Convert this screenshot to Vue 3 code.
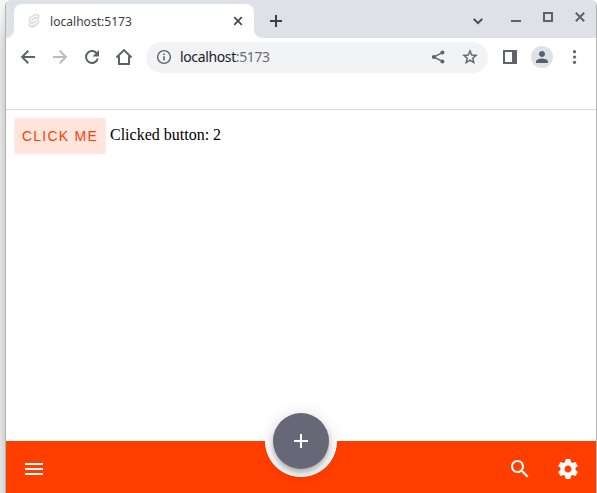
<script setup>
import { ref } from 'vue'

const count = ref(2)
</script>

<template>
  <div class="desktop">
    <div class="window">
      <header class="tabstrip">
        <div class="tab">
          <svg class="favicon" width="16" height="16" viewBox="0 0 16 16">
            <path class="badge" d="M6.200 2.400 9.100 1.100c2.400-1 4.700 1 4.400 3.200-.1.7-.4 1.300-.9 1.800 1.400 2.200.5 4.800-1.500 5.800l-3.400 2.300c-2.400 1.400-5.200-.2-5.200-2.800 0-.8.3-1.500.8-2.100C2.100 7 2.700 4.800 4.200 3.700Z" />
            <path class="letter" d="M11.600 4.600C11.500 3 9.900 2.500 8.800 3.200L5.400 5.300C3.800 6.400 4.900 8.500 6.600 7.900l2.200-1.200c1.800-.7 3.200 1.300 1.600 2.600L7 11.600c-1.400.8-3 0-2.900-1.500" />
          </svg>
          <span class="tab-title">localhost:5173</span>
          <svg class="tab-close" width="10" height="10" viewBox="0 0 10 10"><path d="m1.200 1.200 7.600 7.600m0-7.600L1.200 8.800" /></svg>
        </div>
        <svg class="new-tab" width="12" height="12" viewBox="0 0 12 12"><path d="M6 0v12M0 6h12" /></svg>
        <div class="controls">
          <svg class="chevron" width="12" height="12" viewBox="0 0 12 12"><path d="m1.700 3.900 4.300 4.200 4.300-4.200" /></svg>
          <svg class="minimize" width="10" height="10" viewBox="0 0 10 10"><path d="M0 9h10" /></svg>
          <svg class="maximize" width="10" height="10" viewBox="0 0 10 10"><path d="M1 1h8v8H1z" /></svg>
          <svg class="close" width="10" height="10" viewBox="0 0 10 10"><path d="m.8.8 8.400 8.400m0-8.400L.8 9.200" /></svg>
        </div>
      </header>

      <nav class="toolbar">
        <span class="cell"><svg width="16" height="16" viewBox="0 0 16 16"><path class="line" d="M15 8H2.400M8.300 1.800 2.100 8l6.200 6.200" /></svg></span>
        <span class="cell disabled"><svg width="16" height="16" viewBox="0 0 16 16"><path class="line" d="M1 8h12.600M7.700 1.800 13.900 8l-6.200 6.200" /></svg></span>
        <span class="cell"><svg width="16" height="16" viewBox="0 0 16 16"><path class="line" d="M13.200 4.900A6 6 0 1 0 13.800 9.500" /><path d="M15 1v6.500H8.500z" /></svg></span>
        <span class="cell"><svg width="18" height="18" viewBox="0 0 18 18"><path class="line" d="M1.500 9.500 9 2.100l7.500 7.400M4 8.200v7.800h10V8.200" /></svg></span>
        <div class="address">
          <span class="cell info"><svg width="16" height="16" viewBox="0 0 16 16"><circle class="thin" cx="8" cy="8" r="6.400" /><path d="M7.200 7.300h1.600v4H7.200zM7.200 4.500h1.600v1.600H7.200z" /></svg></span>
          <span class="url">localhost<span class="port">:5173</span></span>
          <span class="cell share"><svg width="16" height="16" viewBox="0 0 16 16"><path class="thin" d="m12.400 3.700-8.800 4.300 8.800 4.300" /><circle cx="12.400" cy="3.500" r="2" /><circle cx="3.800" cy="8" r="2" /><circle cx="12.400" cy="12.500" r="2" /></svg></span>
          <span class="cell"><svg class="star" width="18" height="18" viewBox="0 0 24 24"><path d="m22 9.240-7.190-.62L12 2 9.190 8.630 2 9.240l5.460 4.730L5.820 21 12 17.270 18.180 21l-1.630-7.030L22 9.240zM12 15.400l-3.760 2.270 1-4.280-3.320-2.880 4.380-.38L12 6.100l1.710 4.040 4.380.38-3.320 2.880 1 4.280L12 15.400z" /></svg></span>
        </div>
        <span class="cell"><svg width="14" height="14" viewBox="0 0 14 14"><path fill-rule="evenodd" d="M0 0h14v14H0zM2 2v10h7V2z" /></svg></span>
        <span class="cell"><span class="avatar"><svg width="18" height="18" viewBox="0 0 24 24"><path d="M12 12c2.210 0 4-1.790 4-4s-1.790-4-4-4-4 1.790-4 4 1.790 4 4 4zm0 2c-2.670 0-8 1.340-8 4v2h16v-2c0-2.660-5.330-4-8-4z" /></svg></span></span>
        <span class="cell"><svg width="5" height="14" viewBox="0 0 5 14"><circle cx="2.500" cy="1.700" r="1.600" /><circle cx="2.500" cy="7" r="1.600" /><circle cx="2.500" cy="12.300" r="1.600" /></svg></span>
      </nav>

      <div class="bookmarks"></div>

      <main class="page">
        <button class="action" @click="count++">CLICK ME</button>
        <span class="status">Clicked button: {{ count }}</span>
      </main>

      <footer class="appbar">
        <svg width="24" height="24" viewBox="0 0 24 24"><path d="M3 18h18v-2H3v2zm0-5h18v-2H3v2zm0-7v2h18V6H3z" /></svg>
        <div class="notch">
          <button class="fab"><svg width="24" height="24" viewBox="0 0 24 24"><path d="M19 13h-6v6h-2v-6H5v-2h6V5h2v6h6v2z" /></svg></button>
        </div>
        <div class="appbar-actions">
          <svg width="24" height="24" viewBox="0 0 24 24"><path d="M15.500 14h-.79l-.28-.27C15.410 12.590 16 11.110 16 9.500 16 5.910 13.090 3 9.500 3S3 5.910 3 9.500 5.910 16 9.500 16c1.610 0 3.090-.59 4.230-1.570l.27.28v.79l5 4.990L20.490 19l-4.990-5zm-6 0C7.010 14 5 11.990 5 9.500S7.010 5 9.500 5 14 7.010 14 9.500 11.990 14 9.500 14z" /></svg>
          <svg width="24" height="24" viewBox="0 0 24 24"><path d="M19.430 12.980c.04-.32.07-.64.07-.98s-.03-.66-.07-.98l2.110-1.650c.19-.15.24-.42.12-.64l-2-3.460c-.12-.22-.39-.3-.61-.22l-2.490 1c-.52-.4-1.080-.73-1.690-.98l-.38-2.650C14.460 2.180 14.250 2 14 2h-4c-.25 0-.46.18-.49.42l-.38 2.650c-.61.25-1.170.59-1.690.98l-2.490-1c-.23-.09-.49 0-.61.22l-2 3.460c-.13.22-.07.49.12.64l2.110 1.650c-.04.32-.07.65-.07.98s.03.66.07.98l-2.110 1.650c-.19.15-.24.42-.12.64l2 3.460c.12.22.39.3.61.22l2.490-1c.52.4 1.080.73 1.690.98l.38 2.650c.03.24.24.42.49.42h4c.25 0 .46-.18.49-.42l.38-2.650c.61-.25 1.170-.59 1.690-.98l2.490 1c.23.09.49 0 .61-.22l2-3.460c.12-.22.07-.49-.12-.64l-2.110-1.650zM12 15.500c-1.930 0-3.500-1.570-3.500-3.500s1.570-3.500 3.500-3.500 3.500 1.570 3.500 3.500-1.570 3.500-3.500 3.500z" /></svg>
        </div>
      </footer>
    </div>
  </div>
</template>

<style>
body {
  margin: 0;
  overflow: hidden;
}
</style>

<style scoped>
.desktop {
  box-sizing: border-box;
  width: 597px;
  height: 493px;
  padding-left: 5px;
  background:
    linear-gradient(to bottom, rgba(255, 255, 255, 0.75), rgba(255, 255, 255, 0) 45px),
    linear-gradient(to right, #e5e5e5, #d2d2d2 5px, #fff 5px);
}
.window {
  box-sizing: border-box;
  display: flex;
  flex-direction: column;
  width: 592px;
  height: 493px;
  border: solid #b2b2b2;
  border-width: 0 1px;
  border-radius: 6px 6px 0 0;
  background: #fff;
}
svg {
  display: block;
  flex: none;
  fill: currentColor;
}
.tabstrip {
  display: flex;
  align-items: center;
  flex: none;
  height: 38px;
  padding-left: 8px;
  border-radius: 6px 6px 0 0;
  background: #dee1e6;
  color: #5f6368;
}
.tab {
  position: relative;
  box-sizing: border-box;
  display: flex;
  align-items: center;
  align-self: flex-end;
  width: 240px;
  height: 34px;
  padding: 0 11px 0 12px;
  border-radius: 8px 8px 0 0;
  background: #fff;
}
.tab::before,
.tab::after {
  content: '';
  position: absolute;
  bottom: 0;
  width: 8px;
  height: 8px;
}
.tab::before {
  right: 100%;
  background: radial-gradient(circle at 0 0, transparent 7.5px, #fff 8.2px);
}
.tab::after {
  left: 100%;
  background: radial-gradient(circle at 100% 0, transparent 7.5px, #fff 8.2px);
}
.badge {
  fill: #dcdcdc;
}
.letter {
  fill: none;
  stroke: #fff;
  stroke-width: 1.2;
}
.tab-title {
  margin: 2px 0 0 8px;
  font: 12px/16px 'Noto Sans', sans-serif;
  letter-spacing: 0.04px;
  color: #3c4043;
}
.tab-close {
  margin-left: auto;
  fill: none;
  stroke: #45494d;
  stroke-width: 1.7;
}
.new-tab {
  margin: 4px 0 0 16px;
  stroke: #3c4043;
  stroke-width: 2;
}
.controls {
  display: flex;
  align-items: flex-start;
  height: 38px;
  margin-left: auto;
  padding-right: 11px;
}
.controls svg {
  fill: none;
  stroke: currentColor;
  stroke-width: 2;
}
.controls .chevron {
  margin: 15px 27px 0 0;
  color: #45494d;
}
.controls .minimize {
  margin: 12px 22px 0 0;
}
.controls .maximize {
  margin: 12px 22px 0 0;
}
.controls .close {
  margin-top: 12px;
}
.toolbar {
  display: flex;
  align-items: center;
  flex: none;
  height: 38px;
  padding: 0 6px;
  color: #5f6368;
}
.cell {
  display: flex;
  align-items: center;
  justify-content: center;
  flex: none;
  width: 32px;
  height: 32px;
}
.disabled {
  color: #babcbe;
}
.line {
  fill: none;
  stroke: currentColor;
  stroke-width: 2;
}
.thin {
  fill: none;
  stroke: currentColor;
  stroke-width: 1.4;
}
.star {
  stroke: currentColor;
  stroke-width: 0.4;
}
.address {
  box-sizing: border-box;
  display: flex;
  align-items: center;
  flex: 1;
  height: 31px;
  margin: 0 6px;
  padding: 0 2px;
  border-radius: 16px;
  background: #f1f3f4;
}
.url {
  font: 14px/20px 'Noto Sans', sans-serif;
  letter-spacing: -0.37px;
  color: #202124;
}
.port {
  color: #6b6f74;
}
.share {
  margin-left: auto;
}
.avatar {
  display: flex;
  align-items: center;
  justify-content: center;
  width: 22px;
  height: 22px;
  border-radius: 50%;
  background: #dee1e6;
  color: #565f73;
}
.bookmarks {
  flex: none;
  height: 33px;
  border-bottom: 1px solid #dadada;
}
.page {
  display: flex;
  align-items: flex-start;
  flex: 1;
  gap: 4px;
  padding: 8px;
}
.action {
  width: 92px;
  height: 36px;
  padding: 0;
  border: 0;
  border-radius: 4px;
  background: #ffe5de;
  color: #ff3e00;
  font: 14px/36px 'Liberation Sans', sans-serif;
  letter-spacing: 1.25px;
  white-space: nowrap;
}
.status {
  margin-top: 7px;
  font: 16px/19px 'Liberation Serif', serif;
  color: #000;
}
.appbar {
  display: grid;
  grid-template-columns: 1fr 72px 1fr;
  align-items: center;
  flex: none;
  box-sizing: border-box;
  height: 52px;
  padding: 4px 16px 0;
  color: #fff;
  background: radial-gradient(circle at 50% 0, #fff 35.6px, #ff3e00 36.400px);
}
.notch {
  display: flex;
  align-self: start;
  justify-content: center;
  margin-top: -32px;
}
.fab {
  display: flex;
  align-items: center;
  justify-content: center;
  width: 56px;
  height: 56px;
  padding: 0;
  border: 0;
  border-radius: 50%;
  background: #676778;
  color: #fff;
  box-shadow: 0 3px 5px -1px rgba(0, 0, 0, 0.2), 0 6px 10px rgba(0, 0, 0, 0.14), 0 1px 18px rgba(0, 0, 0, 0.12);
}
.appbar-actions {
  display: flex;
  justify-content: flex-end;
  gap: 24px;
}
</style>
